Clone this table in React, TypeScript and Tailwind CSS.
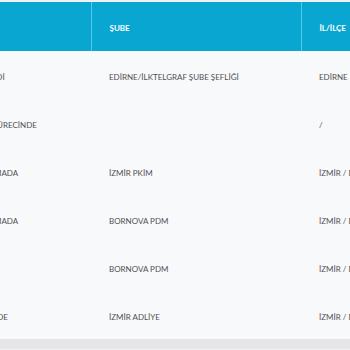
const rows = [
  { durum: "ALICIYA TESLİM EDİLDİ", sube: "EDİRNE/İLKTELGRAF ŞUBE ŞEFLİĞİ", ilce: "EDİRNE / MERKEZ" },
  { durum: "TEBLİGAT DAĞITIM SÜRECİNDE", sube: "", ilce: "/" },
  { durum: "TRANSFER AYRIŞTIRMADA", sube: "İZMİR PKİM", ilce: "İZMİR / BORNOVA" },
  { durum: "TRANSFER AYRIŞTIRMADA", sube: "BORNOVA PDM", ilce: "İZMİR / BORNOVA" },
  { durum: "", sube: "BORNOVA PDM", ilce: "İZMİR / BORNOVA" },
  { durum: "TEBLİGAT MERKEZİNDE", sube: "İZMİR ADLİYE", ilce: "İZMİR / BAYRAKLI" },
];

export default function App() {
  return (
    <div
      className="h-[350px] w-[350px] overflow-hidden bg-[#eef2f5] pt-[2px]"
      style={{ fontFamily: "Lato, 'Open Sans', sans-serif" }}
    >
      <table className="-ml-[130px] w-[641px] min-w-[641px] table-fixed border-collapse text-[8px] uppercase">
        <colgroup>
          <col className="w-[221px]" />
          <col className="w-[210px]" />
          <col className="w-[210px]" />
        </colgroup>
        <thead>
          <tr className="h-[49px] bg-[#0aa6d2] text-left text-white">
            <th className="pl-[18px] pt-[2px] font-bold">Durum</th>
            <th className="border-l border-[#55c6e9] pl-[18px] pt-[2px] font-bold">Şube</th>
            <th className="border-l border-[#55c6e9] pl-[18px] pt-[2px] font-bold">İl/İlçe</th>
          </tr>
        </thead>
        <tbody className="bg-[#f8f9fb] text-[#505053]">
          {rows.map((row, i) => (
            <tr key={i} className="h-[48px]">
              <td className="whitespace-nowrap pl-[49px] pt-[4px]">{row.durum}</td>
              <td className="whitespace-nowrap pl-[18px] pt-[4px]">{row.sube}</td>
              <td className="whitespace-nowrap pl-[18px] pt-[4px]">{row.ilce}</td>
            </tr>
          ))}
        </tbody>
      </table>
      <div className="h-[10px] bg-[#e6e6e8]" />
    </div>
  );
}
